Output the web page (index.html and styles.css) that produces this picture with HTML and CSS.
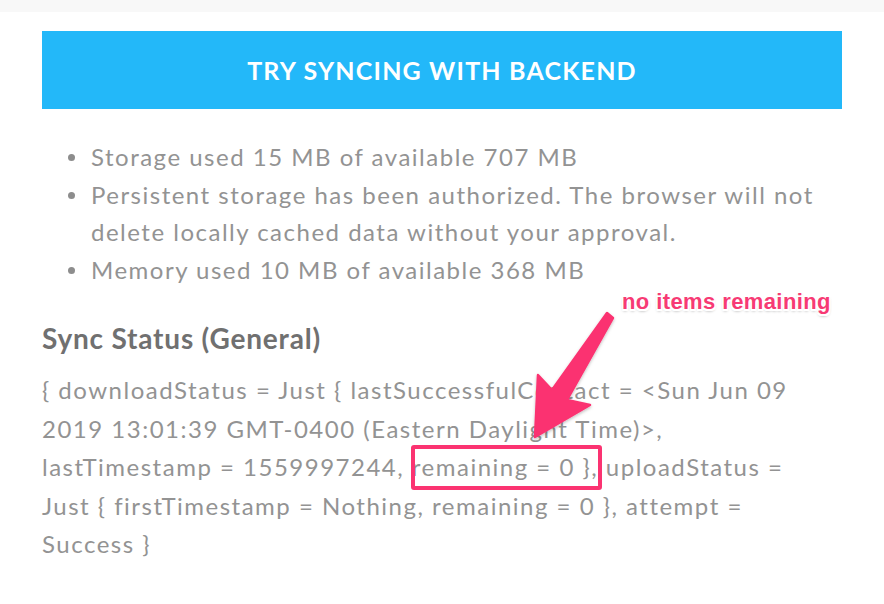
FILE: index.html
```html
<!DOCTYPE html>
<html>
<head>
<meta charset="utf-8">
<link rel="stylesheet" href="styles.css">
</head>
<body>
<div class="page">
  <div class="topbar"></div>
  <main class="content">
    <button class="sync-btn">TRY SYNCING WITH BACKEND</button>
    <ul class="stats">
      <li><span class="txt">Storage used 15 MB of available 707 MB</span></li>
      <li><span class="txt">Persistent storage has been authorized. The browser will not<br>delete locally cached data without your approval.</span></li>
      <li><span class="txt">Memory used 10 MB of available 368 MB</span></li>
    </ul>
    <h2 class="section-title">Sync Status (General)</h2>
    <p class="status">{ downloadStatus = Just { lastSuccessfulContact = &lt;Sun Jun 09<br>2019 13:01:39 GMT-0400 (Eastern Daylight Time)&gt;,<br>lastTimestamp = 1559997244, remaining = 0 }, uploadStatus =<br>Just { firstTimestamp = Nothing, remaining = 0 }, attempt =<br>Success }</p>
  </main>
  <div class="note">no items remaining</div>
  <div class="hl-box"></div>
  <svg class="arrow" width="884" height="604" viewBox="0 0 884 604">
    <defs>
      <filter id="sh" x="-20%" y="-20%" width="140%" height="140%">
        <feDropShadow dx="0" dy="1.5" stdDeviation="1.5" flood-color="#000" flood-opacity="0.25"/>
      </filter>
    </defs>
    <polygon points="613,318 567,400 590,405 535,437 538,375 552,390 607,313" fill="#fb3371" stroke="#fb3371" stroke-width="2.5" stroke-linejoin="round" filter="url(#sh)"/>
  </svg>
</div>
</body>
</html>
```
FILE: styles.css
```css
html, body {
  margin: 0;
  padding: 0;
  background: #ffffff;
}
.page {
  position: relative;
  width: 884px;
  height: 604px;
  overflow: hidden;
}
.topbar {
  height: 12px;
  background: #f8f8f8;
}
.content {
  padding: 0 42px;
  font-family: Lato, "Open Sans", sans-serif;
  color: #939393;
}
.sync-btn {
  display: block;
  width: 800px;
  height: 78px;
  margin: 19px 0 0 0;
  padding: 0;
  border: none;
  background: #23b8f9;
  color: #ffffff;
  font-family: Lato, sans-serif;
  font-weight: 700;
  font-size: 25px;
  letter-spacing: 1.2px;
}
.stats {
  list-style: none;
  margin: 29px 0 0 0;
  padding: 0;
  font-size: 24px;
  font-weight: 400;
  line-height: 37.5px;
  letter-spacing: 1.5px;
}
.stats li {
  display: flex;
  align-items: flex-start;
}
.stats li::before {
  content: "";
  flex: none;
  width: 7px;
  height: 7px;
  border-radius: 50%;
  background: #8d8d8d;
  margin: 16px 16px 0 26px;
}
.section-title {
  margin: 35px 0 0 0;
  font-size: 28px;
  line-height: 30px;
  font-weight: 700;
  letter-spacing: 0.8px;
  color: #707070;
}
.status {
  margin: 18px 0 0 0;
  font-size: 24px;
  font-weight: 400;
  line-height: 38.5px;
  letter-spacing: 1.5px;
  white-space: nowrap;
}
.note {
  position: absolute;
  left: 622px;
  top: 289px;
  font-family: "Liberation Sans", Arial, sans-serif;
  font-weight: 700;
  font-size: 22px;
  line-height: 26px;
  letter-spacing: 0.4px;
  color: #f73a74;
  text-shadow: -1.5px -1.5px 0 #fff, 1.5px -1.5px 0 #fff, -1.5px 1.5px 0 #fff, 1.5px 1.5px 0 #fff, 0 -1.5px 0 #fff, 0 1.5px 0 #fff, 0 2px 3px rgba(0,0,0,0.4);
}
.hl-box {
  position: absolute;
  left: 411px;
  top: 445px;
  width: 183px;
  height: 37px;
  border: 4px solid #fb3371;
  border-radius: 3px;
}
.arrow {
  position: absolute;
  left: 0;
  top: 0;
  pointer-events: none;
}
```
